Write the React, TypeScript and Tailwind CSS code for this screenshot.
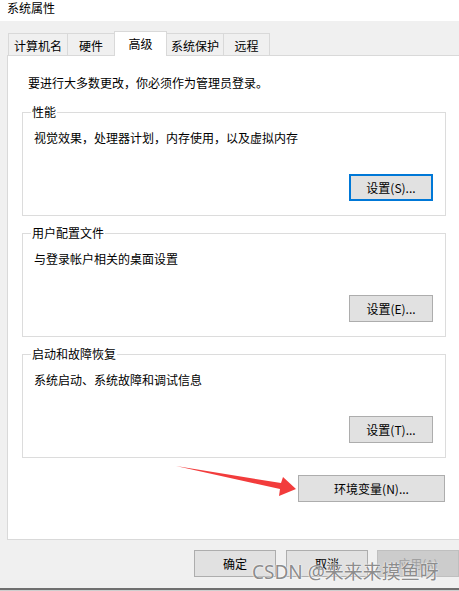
const tabs = [
  { label: "计算机名", w: "w-[60px]", active: false },
  { label: "硬件", w: "w-[48px]", active: false },
  { label: "高级", w: "w-[53px]", active: true },
  { label: "系统保护", w: "w-[58px]", active: false },
  { label: "远程", w: "w-[47px]", active: false },
];

const groups = [
  { title: "性能", desc: "视觉效果，处理器计划，内存使用，以及虚拟内存", btn: "设置(S)...", focus: true },
  { title: "用户配置文件", desc: "与登录帐户相关的桌面设置", btn: "设置(E)...", focus: false },
  { title: "启动和故障恢复", desc: "系统启动、系统故障和调试信息", btn: "设置(T)...", focus: false },
];

function Btn({ label, focus, className }: { label: string; focus?: boolean; className?: string }) {
  return (
    <div
      className={`flex items-center justify-center h-[27px] bg-[#e1e1e1] leading-[16px] ${
        focus ? "border-2 border-[#0078d7]" : "border border-[#adadad]"
      } ${className ?? ""}`}
    >
      {label}
    </div>
  );
}

export default function App() {
  return (
    <div className="relative w-[459px] h-[591px] overflow-hidden bg-[#f0f0f0] text-[12px] text-black font-['Microsoft_YaHei','Noto_Sans_CJK_SC',sans-serif]">
      {/* title */}
      <div className="h-[21px] bg-white pl-[7px] leading-[15px]">系统属性</div>

      {/* tabs */}
      <div className="flex items-end h-[34px] pl-[8px]">
        {tabs.map((t, i) =>
          t.active ? (
            <div
              key={t.label}
              className={`relative z-10 -mb-px h-[25px] ${t.w} -ml-px bg-white border-x border-t border-[#d9d9d9] flex items-start justify-center pt-[4px] leading-[16px]`}
            >
              {t.label}
            </div>
          ) : (
            <div
              key={t.label}
              className={`h-[22px] ${t.w} ${i > 0 ? "-ml-px" : ""} bg-[#f0f0f0] border-x border-t border-[#d9d9d9] flex items-start justify-center pt-[4px] leading-[16px]`}
            >
              {t.label}
            </div>
          )
        )}
      </div>

      {/* panel */}
      <div className="ml-[7px] w-[470px] h-[485px] border border-[#d9d9d9] bg-white pl-[14px] pt-[19px]">
        <p className="pl-[6px] leading-[16px]">要进行大多数更改，你必须作为管理员登录。</p>

        <div className="mt-[21px] w-[424px] flex flex-col gap-[17px]">
          {groups.map((g) => (
            <div key={g.title} className="relative h-[104px] border border-[#dcdcdc] pl-[11px] pt-[17px] flex flex-col">
              <span className="absolute -top-[9px] left-[8px] bg-white px-px leading-[16px]">{g.title}</span>
              <p className="leading-[16px]">{g.desc}</p>
              <Btn label={g.btn} focus={g.focus} className="mt-auto self-end mr-[12px] mb-[14px] w-[84px]" />
            </div>
          ))}
          <Btn label="环境变量(N)..." className="self-end mr-px w-[147px]" />
        </div>
      </div>

      {/* bottom buttons */}
      <div className="mt-[10px] flex">
        <Btn label="确定" className="ml-[194px] w-[85px]" />
        <Btn label="取消" className="ml-[10px] w-[85px]" />
        <div className="ml-[9px] w-[85px] h-[27px] flex items-center justify-center bg-[#cccccc] border border-[#bfbfbf] text-[#a0a0a0] leading-[16px]">
          应用(A)
        </div>
      </div>
      <div className="mt-[11px] h-[2px] bg-[#6f6f6f]" />
      <div className="h-px bg-[#cfcfcf]" />

      {/* red arrow annotation */}
      <svg className="absolute inset-0 pointer-events-none" width="459" height="591" viewBox="0 0 459 591">
        <polygon
          points="176,466 281,483 283,477 296,489 279,496 280,489"
          fill="#f23c3c"
        />
      </svg>

      {/* watermark */}
      <div className="absolute left-[252px] top-[560px] text-[19px] leading-[24px] text-[#7d7d7d]/90 whitespace-nowrap font-['Noto_Sans','Noto_Sans_CJK_SC',sans-serif] [text-shadow:0_0_2px_#ffffff,0_0_1px_#ffffff]">
        CSDN @来来来摸鱼呀
      </div>
    </div>
  );
}
